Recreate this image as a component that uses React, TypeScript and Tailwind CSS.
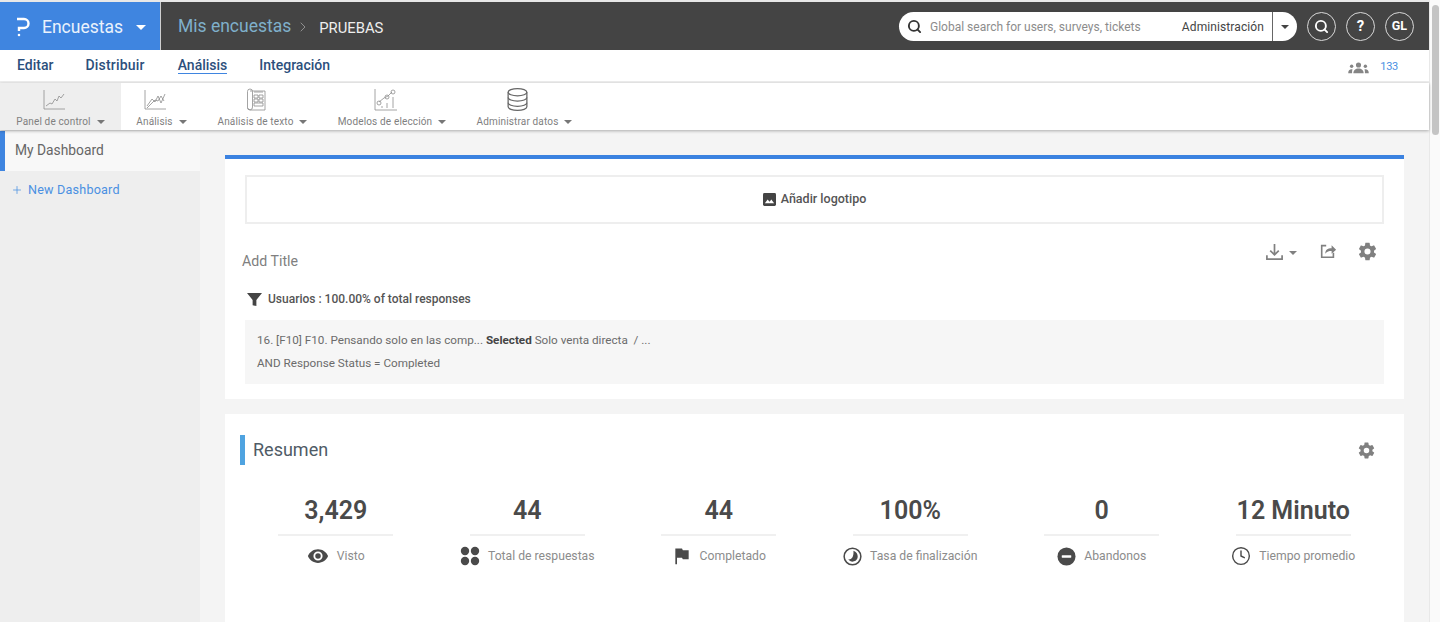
import { ChevronRight, Plus, Search, Clock } from "lucide-react";
import type { ReactNode } from "react";

const font = "font-['Roboto','Noto_Sans',sans-serif]";

function Caret({ className = "border-t-[#777]" }: { className?: string }) {
  return <span className={`inline-block h-0 w-0 border-x-[4px] border-t-[4px] border-x-transparent ${className}`} />;
}

function Gear({ className = "" }: { className?: string }) {
  return (
    <svg viewBox="0 0 24 24" className={className} fill="#808080">
      <path d="M19.4 13c.04-.33.06-.66.06-1s-.02-.67-.06-1l2.1-1.65c.19-.15.24-.42.12-.64l-2-3.46c-.12-.22-.39-.3-.61-.22l-2.49 1c-.52-.4-1.08-.73-1.69-.98l-.38-2.65A.49.49 0 0 0 14 2h-4c-.25 0-.46.18-.49.42l-.38 2.65c-.61.25-1.17.59-1.69.98l-2.49-1c-.23-.09-.49 0-.61.22l-2 3.46c-.13.22-.07.49.12.64L4.57 11c-.04.33-.07.67-.07 1s.03.67.07 1l-2.11 1.65c-.19.15-.24.42-.12.64l2 3.46c.12.22.39.3.61.22l2.49-1c.52.4 1.08.73 1.69.98l.38 2.65c.03.24.24.42.49.42h4c.25 0 .46-.18.49-.42l.38-2.65c.61-.25 1.17-.59 1.69-.98l2.49 1c.23.09.49 0 .61-.22l2-3.46c.12-.22.07-.49-.12-.64L19.4 13zM12 15.5a3.5 3.5 0 1 1 0-7 3.5 3.5 0 0 1 0 7z" />
    </svg>
  );
}

const lineIcon = "mr-[14px] h-[24px] w-[24px] fill-none stroke-[#8d8d8d] stroke-[0.8]";

const tools: { label: string; width: string; active?: boolean; icon: ReactNode }[] = [
  {
    label: "Panel de control",
    width: "w-[121px]",
    active: true,
    icon: (
      <svg viewBox="0 0 24 24" className={lineIcon}>
        <path d="M2 2v19h21" />
        <path d="M4 18l4-3 2 1 3-5 2 2 2-5 2 2 3-4" />
      </svg>
    ),
  },
  {
    label: "Análisis",
    width: "w-[81px]",
    icon: (
      <svg viewBox="0 0 24 24" className={lineIcon}>
        <path d="M2 2v19h21" />
        <path d="M4 18l5-7 3 3 3-6 3 7 4-9" />
        <path d="M4 20l5-5 3-3 3 1 3-5 3 5" />
      </svg>
    ),
  },
  {
    label: "Análisis de texto",
    width: "w-[121px]",
    icon: (
      <svg viewBox="0 0 24 24" className={lineIcon}>
        <path d="M6 3h15v19H6a2.500 2.500 0 0 1-2.500-2.500V3.500a2.500 2.500 0 0 1 5 0V19a2.500 2.500 0 0 1-5 .500" />
        <path d="M10 4h9M10 7h4v3h-4zM15 7h4v3h-4zM10 11h4v3h-4zM15 11h4v3h-4zM10 15h9v3h-9z" />
      </svg>
    ),
  },
  {
    label: "Modelos de elección",
    width: "w-[138px]",
    icon: (
      <svg viewBox="0 0 24 24" className={lineIcon}>
        <path d="M2 1v21h22" />
        <path d="M6 14l5-4 4-2 4-4" />
        <circle cx="6" cy="15" r="2" />
        <circle cx="14" cy="9" r="2" />
        <circle cx="20" cy="4" r="2" />
        <path d="M14 15v5M20 9v11M9 18v2" />
      </svg>
    ),
  },
  {
    label: "Administrar datos",
    width: "w-[127px]",
    icon: (
      <svg viewBox="0 0 24 24" className="mr-[14px] mt-[-1px] h-[25px] w-[25px] fill-none stroke-[#666] stroke-[1.200]">
        <ellipse cx="12" cy="5" rx="9" ry="3.500" />
        <path d="M3 5v14c0 2 4 3.500 9 3.500s9-1.500 9-3.500V5" />
        <path d="M3 10c0 2 4 3.500 9 3.500s9-1.500 9-3.500M3 15c0 2 4 3.500 9 3.500s9-1.500 9-3.500" />
      </svg>
    ),
  },
];

const stats: { value: string; label: string; icon: ReactNode }[] = [
  {
    value: "3,429",
    label: "Visto",
    icon: (
      <svg viewBox="0 0 24 24" className="h-[22px] w-[22px]" fill="#4a4a4a">
        <path d="M12 4.500C7 4.500 2.700 7.600 1 12c1.700 4.400 6 7.500 11 7.500s9.300-3.100 11-7.500c-1.700-4.400-6-7.500-11-7.500zM12 17a5 5 0 1 1 0-10 5 5 0 0 1 0 10zm0-8a3 3 0 1 0 0 6 3 3 0 0 0 0-6z" />
      </svg>
    ),
  },
  {
    value: "44",
    label: "Total de respuestas",
    icon: (
      <svg viewBox="0 0 20 20" className="h-[20px] w-[20px]" fill="#4a4a4a">
        <circle cx="5" cy="5" r="4.200" />
        <circle cx="15" cy="5" r="4.200" />
        <circle cx="5" cy="15" r="4.200" />
        <circle cx="15" cy="15" r="4.200" />
      </svg>
    ),
  },
  {
    value: "44",
    label: "Completado",
    icon: (
      <svg viewBox="0 0 24 24" className="h-[20px] w-[20px]" fill="#4a4a4a">
        <path d="M4 3h8l1 2h7v11h-7l-1-2H6v8H4z" />
      </svg>
    ),
  },
  {
    value: "100%",
    label: "Tasa de finalización",
    icon: (
      <svg viewBox="0 0 20 20" className="h-[19px] w-[19px]">
        <circle cx="10" cy="10" r="8.800" fill="none" stroke="#4a4a4a" strokeWidth="1.600" />
        <path d="M11 4c3 1 4.500 3.500 4.500 6a5.500 5.500 0 0 1-10 3c3 .5 6-1.500 5.500-9z" fill="#4a4a4a" />
      </svg>
    ),
  },
  {
    value: "0",
    label: "Abandonos",
    icon: (
      <svg viewBox="0 0 20 20" className="h-[19px] w-[19px]">
        <circle cx="10" cy="10" r="9.500" fill="#4a4a4a" />
        <rect x="5" y="8.700" width="10" height="2.600" rx="0.500" fill="#fff" />
      </svg>
    ),
  },
  {
    value: "12 Minuto",
    label: "Tiempo promedio",
    icon: <Clock size={20} strokeWidth={1.700} color="#4a4a4a" />,
  },
];

export default function App() {
  return (
    <div className={`${font} flex h-[622px] w-[1440px] overflow-hidden bg-white`}>
      <div className="flex h-full w-[1429px] flex-col">
        <div className="h-[2px] shrink-0 bg-[#e8e8e8]" />

        {/* top bar */}
        <header className="flex h-[48px] shrink-0 items-center bg-[#444444] text-white">
          <div className="flex h-full w-[161px] shrink-0 items-center border-r border-[#cfcfcf] bg-[#3f85e0] pl-[16px] pt-[2px]">
            <svg viewBox="0 0 14 20" className="h-[20px] w-[14px]" fill="none" stroke="#fff" strokeWidth="2.400">
              <path d="M1 2h7a4.200 4.200 0 0 1 0 9H3v3" />
              <circle cx="3" cy="18" r="0.700" fill="#fff" strokeWidth="1.200" />
            </svg>
            <span className="ml-[12px] text-[17.5px] text-[#eaf2fc]">Encuestas</span>
            <Caret className="ml-[13px] border-t-white !border-x-[5px] !border-t-[5px]" />
          </div>
          <span className="ml-[17px] pt-[1px] text-[17.5px] text-[#7fb0cb]">Mis encuestas</span>
          <ChevronRight size={16} strokeWidth={1.500} className="ml-[4px] mt-[1px] text-[#8f8f8f]" />
          <span className="ml-[8px] mt-[5px] text-[14.8px] text-[#eeeeee]">PRUEBAS</span>

          <div className="ml-auto mt-[1px] flex h-[29px] w-[398px] items-center rounded-full bg-white pl-[8px] text-[12px]">
            <Search size={15} strokeWidth={3} className="text-[#333]" />
            <span className="ml-[8px] text-[#8c8c8c]">Global search for users, surveys, tickets</span>
            <span className="ml-auto tracking-[0.1px] text-[#444]">Administración</span>
            <span className="ml-[8px] flex h-full w-[25px] items-center justify-center border-l border-[#666]">
              <Caret className="border-t-[#444]" />
            </span>
          </div>
          <div className="ml-[10px] mr-[15px] mt-[1px] flex gap-[10px]">
            <span className="flex h-[29px] w-[29px] items-center justify-center rounded-full border border-[#d8d8d8]">
              <Search size={15} strokeWidth={3} />
            </span>
            <span className="flex h-[29px] w-[29px] items-center justify-center rounded-full border border-[#d8d8d8] text-[15px] font-bold">?</span>
            <span className="flex h-[29px] w-[29px] items-center justify-center rounded-full border border-[#d8d8d8] text-[12.5px] font-bold">GL</span>
          </div>
        </header>

        {/* tabs */}
        <nav className="flex h-[33px] shrink-0 items-center border-b-2 border-[#eeeeee] text-[14px] font-medium text-[#2c4f7c]">
          <a className="ml-[17px]">Editar</a>
          <a className="ml-[32px] tracking-[0.2px]">Distribuir</a>
          <a className="ml-[33px] border-b border-[#3f85e0] leading-[16px]">Análisis</a>
          <a className="ml-[32px]">Integración</a>
          <svg viewBox="0 0 24 14" className="ml-auto mt-[4px] h-[12px] w-[21px]" fill="#858585">
            <circle cx="12" cy="3.500" r="3" />
            <path d="M6 13c0-3.500 2.500-5.500 6-5.500s6 2 6 5.500z" />
            <circle cx="4" cy="5" r="2" />
            <path d="M0 13c0-3 1.500-4.500 4-4.500 .6 0 1 .1 1 .1C4.500 10 4.500 11.500 4.500 13z" />
            <circle cx="20" cy="5" r="2" />
            <path d="M24 13c0-3-1.500-4.500-4-4.500-.6 0-1 .1-1 .1 .5 1.400.5 2.900.5 4.400z" />
          </svg>
          <span className="ml-[11px] mr-[31px] mt-[4px] text-[11px] font-normal tracking-[-0.3px] text-[#4a90e2]">133</span>
        </nav>

        {/* toolbar */}
        <div className="z-10 flex h-[47px] shrink-0 bg-white shadow-[0_1px_3px_rgba(0,0,0,0.3)]">
          {tools.map((t) => (
            <div
              key={t.label}
              className={`flex flex-col items-center justify-between pb-[1px] pt-[5px] ${t.width} ${t.active ? "bg-[#eeeeee]" : ""}`}
            >
              {t.icon}
              <span className="flex items-center gap-[6px] whitespace-nowrap text-[10px] tracking-[0.15px] text-[#808080]">
                {t.label}
                <Caret />
              </span>
            </div>
          ))}
        </div>

        <div className="flex min-h-0 flex-1">
          {/* sidebar */}
          <aside className="w-[200px] shrink-0 bg-[#eeeeee]">
            <div className="mt-[1px] flex h-[40px] items-center border-l-[5px] border-[#3f85e0] bg-[#f8f8f8] pb-[2px] pl-[10px] text-[13.8px] text-[#666]">
              My Dashboard
            </div>
            <div className="mt-[10px] flex items-center pl-[11px] text-[12.6px] text-[#4a90e2]">
              <Plus size={12} strokeWidth={1.500} />
              <span className="ml-[5px] tracking-[0.2px]">New Dashboard</span>
            </div>
          </aside>

          {/* main */}
          <main className="min-w-0 flex-1 bg-[#f4f4f4] pl-[25px] pr-[25px] pt-[25px]">
            <section className="h-[244px] border-t-[4px] border-[#3b82e0] bg-white px-[20px] pt-[16px]">
              <div className="flex h-[49px] items-center justify-center gap-[5px] border-2 border-[#eeeeee] text-[12.5px] font-medium text-[#555]">
                <svg viewBox="0 0 14 14" className="h-[13px] w-[13px]">
                  <rect width="14" height="14" rx="1.500" fill="#444" />
                  <path d="M2 11l3-4 2 2.500 2-2.500 3 4z" fill="#fff" />
                </svg>
                Añadir logotipo
              </div>
              <div className="flex h-[46px] items-center">
                <span className="ml-[-3px] mt-[29px] text-[14.2px] text-[#808080]">Add Title</span>
                <div className="ml-auto mr-[6px] mt-[8px] flex items-center">
                  <svg viewBox="0 0 20 20" className="h-[19px] w-[19px]" fill="none" stroke="#808080" strokeWidth="1.800">
                    <path d="M10 2v11M5.500 9l4.500 4.500L14.500 9M2 14v4h16v-4" />
                  </svg>
                  <Caret className="ml-[5px] mt-[4px] border-t-[#808080]" />
                  <svg viewBox="0 0 20 20" className="ml-[22px] h-[18px] w-[18px]" fill="none" stroke="#808080" strokeWidth="1.800">
                    <path d="M8 4H3v13h13v-5" />
                    <path d="M7 13c0-4 2.500-6 7-6V3.500l5 5-5 4.500v-3c-3 0-5 .5-7 3z" fill="#808080" stroke="none" />
                  </svg>
                  <Gear className="ml-[20px] h-[21px] w-[21px]" />
                </div>
              </div>
              <div className="mt-[20px] flex items-center pl-[2px] text-[12px] font-medium text-[#555]">
                <svg viewBox="0 0 16 16" className="h-[15px] w-[15px]" fill="#444">
                  <path d="M0 1h16L10 8.500V15l-4-1V8.500z" />
                </svg>
                <span className="ml-[6px]">Usuarios : 100.00% of total responses</span>
              </div>
              <div className="mt-[12px] h-[64px] bg-[#f6f6f6] px-[12px] pt-[9px] text-[11.7px] leading-[23px] text-[#6b6b6b]">
                <div>
                  16. [F10] F10. Pensando solo en las comp... <b className="font-bold text-[#444]">Selected</b> Solo venta directa &nbsp;/ ...
                </div>
                <div>AND Response Status = Completed</div>
              </div>
            </section>

            <section className="mt-[15px] h-[300px] bg-white px-[15px] pt-[21px]">
              <div className="flex h-[30px] items-center">
                <span className="h-[30px] w-[5px] bg-[#4fa3e0]" />
                <span className="ml-[8px] pb-[2px] text-[18px] text-[#4f5b66]">Resumen</span>
                <Gear className="ml-auto mr-[13px] h-[19px] w-[19px]" />
              </div>
              <div className="mt-[30px] grid grid-cols-6">
                {stats.map((s) => (
                  <div key={s.label} className="flex flex-col items-center">
                    <div className="flex h-[41px] w-[115px] items-center justify-center whitespace-nowrap border-b-2 border-[#f0f0f0] pb-[9px] text-[25px] font-semibold leading-none text-[#4a4a4a]">
                      {s.value}
                    </div>
                    <div className="mt-[9px] flex h-[22px] items-center gap-[8px] whitespace-nowrap text-[12.2px] text-[#8c8c8c]">
                      {s.icon}
                      {s.label}
                    </div>
                  </div>
                ))}
              </div>
            </section>
          </main>
        </div>
      </div>

      {/* scrollbar */}
      <div className="h-full w-[11px] border-l border-[#e8e8e8] bg-[#fafafa] pl-[2px] pt-[5px]">
        <div className="h-[130px] w-[7px] rounded-full bg-[#c4c4c4]" />
      </div>
    </div>
  );
}
